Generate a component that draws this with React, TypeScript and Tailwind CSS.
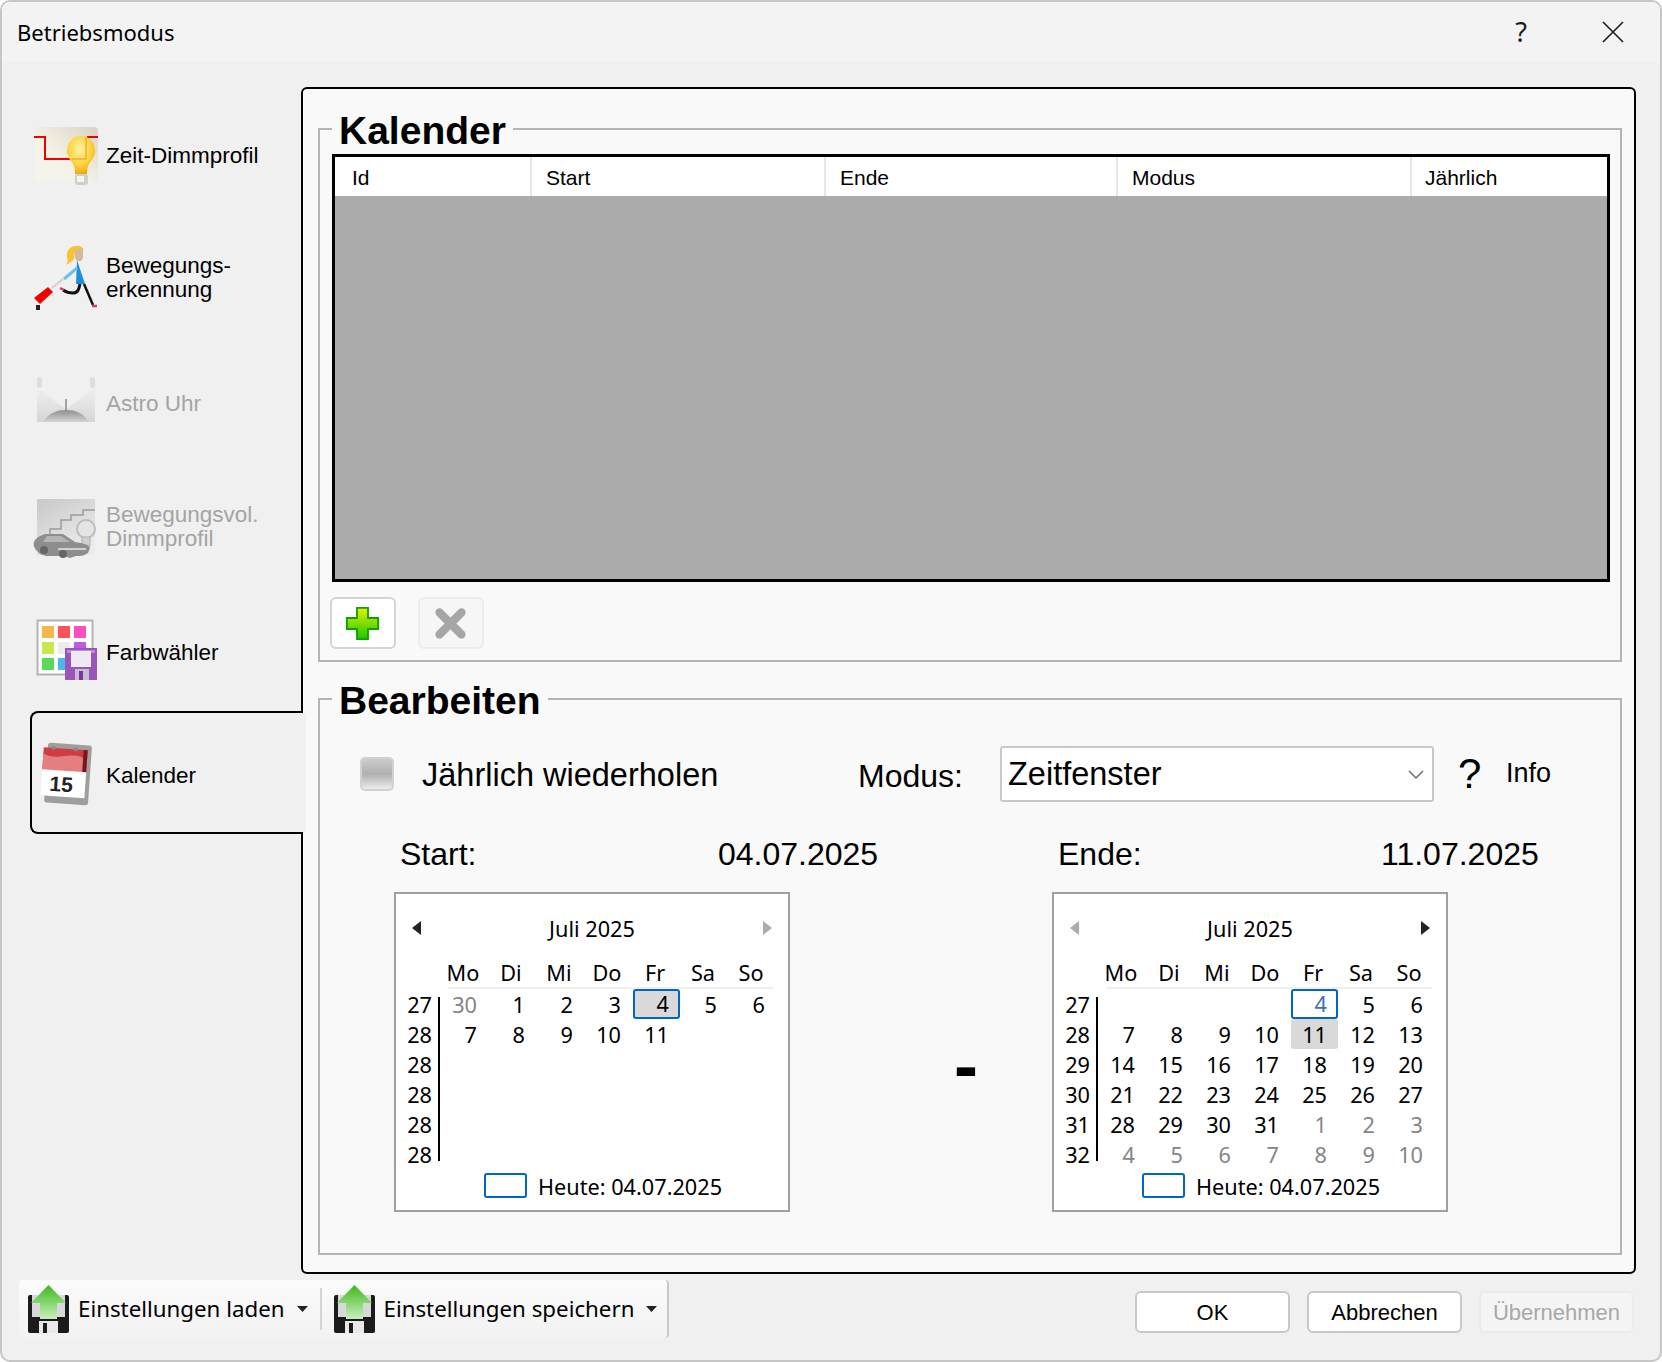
import type { ReactNode } from "react";

const SANS = "font-['Liberation_Sans',Arial,sans-serif]";
const UI = "font-['Noto_Sans',sans-serif]";

function BulbIcon() {
  return (
    <svg width="64" height="64" viewBox="0 0 64 64">
      <defs>
        <linearGradient id="bulbBg" x1="1" y1="0" x2="0" y2="1">
          <stop offset="0" stopColor="#d8d4c4" />
          <stop offset="0.6" stopColor="#f5f3e8" />
          <stop offset="1" stopColor="#f5f4ec" />
        </linearGradient>
        <radialGradient id="bulbGlow" cx="0.45" cy="0.35" r="0.7">
          <stop offset="0" stopColor="#fff3a0" />
          <stop offset="0.6" stopColor="#ffd23c" />
          <stop offset="1" stopColor="#eaa012" />
        </radialGradient>
      </defs>
      <rect x="0" y="3" width="64" height="54" rx="4" fill="url(#bulbBg)" />
      <path d="M0 13H11V35H38" fill="none" stroke="#f00000" strokeWidth="2" />
      <path d="M53 13H64" fill="none" stroke="#f00000" strokeWidth="2" />
      <path d="M33 27c0-9 6-15 14-15s14 6 14 15c0 7-5 10-7 15-1 3-1 6-1 8H41c0-2 0-5-1-8-2-5-7-8-7-15z" fill="url(#bulbGlow)" />
      <path d="M38 35H52V13" fill="none" stroke="#e09a20" strokeWidth="1" />
      <rect x="41" y="50" width="13" height="11" rx="3" fill="#cfcfc8" />
      <rect x="43" y="52" width="7" height="6" fill="#f4f4f0" />
    </svg>
  );
}

function WalkerIcon() {
  return (
    <svg width="75" height="75" viewBox="0 0 75 75" className="-ml-[4px] -mt-[5px]">
      <path d="M37 17C36 9 42 5 50 6l4 3-9 2-1 8-3 3-5 3c2-3 2-5 1-8z" fill="#f5c431" />
      <path d="M45 9h8v9l-2 3h-4l-2-3z" fill="#d8b89a" />
      <path d="M47 20l8 24H46z" fill="#1f8fd8" />
      <path d="M47 28L34 39" stroke="#6cc0ea" strokeWidth="3" />
      <path d="M33 39L22 48" stroke="#cfcfcf" strokeWidth="2" />
      <path d="M4 58L18 47l5 5-13 12z" fill="#f00000" />
      <rect x="6" y="65" width="4" height="5" fill="#222222" />
      <path d="M54 44l9 21" stroke="#111111" strokeWidth="2.5" />
      <path d="M50 44c-1 5-2 9-7 9-4 0-7-1-10-3" fill="none" stroke="#111111" strokeWidth="3" />
      <path d="M62 66h5M30 48l4 2" stroke="#d8386a" strokeWidth="2.5" />
    </svg>
  );
}

function AstroIcon() {
  return (
    <svg width="64" height="64" viewBox="0 0 64 64">
      <defs>
        <linearGradient id="astroDish" x1="0" y1="0" x2="0" y2="1">
          <stop offset="0" stopColor="#8f8f8f" />
          <stop offset="1" stopColor="#d4d4d4" />
        </linearGradient>
        <linearGradient id="astroSide" x1="0" y1="0" x2="0" y2="1">
          <stop offset="0" stopColor="#f0f0f0" />
          <stop offset="1" stopColor="#d6d6d6" />
        </linearGradient>
      </defs>
      <path d="M3 15L30 36H34L61 15V50H3z" fill="url(#astroSide)" />
      <path d="M9 50c6-9 13-12 23-12s17 3 23 12z" fill="url(#astroDish)" />
      <path d="M32 27V39" stroke="#8a8a8a" strokeWidth="1.5" />
      <rect x="3" y="5" width="5" height="11" rx="2.5" fill="#dedede" />
      <rect x="56" y="5" width="5" height="11" rx="2.5" fill="#dedede" />
    </svg>
  );
}

function StairsIcon() {
  return (
    <svg width="75" height="75" viewBox="0 0 75 75" className="-ml-[4px] mt-[2px]">
      <defs>
        <linearGradient id="stairBg" x1="0" y1="0" x2="0.6" y2="1">
          <stop offset="0" stopColor="#c8c8c8" />
          <stop offset="1" stopColor="#ebebeb" />
        </linearGradient>
      </defs>
      <rect x="7" y="7" width="58" height="56" fill="url(#stairBg)" />
      <path d="M20 42V37H31V28H41V23H53V18H65" fill="none" stroke="#9c9c9c" strokeWidth="1.5" />
      <circle cx="56" cy="37" r="9" fill="#e4e4e4" stroke="#bcbcbc" strokeWidth="2" />
      <rect x="52" y="45" width="8" height="9" fill="#d0d0d0" stroke="#b0b0b0" />
      <path d="M4 50c2-5 8-7 11-8h18l12 8c6 1 14 2 15 6l-2 5c-4 3-8 3-12 3l-6 2-6-2H16l-6-2-4-4c-2-3-3-5-2-8z" fill="#8e8e8e" />
      <path d="M17 44h14l9 6H13z" fill="#b4b4b4" />
      <path d="M28 57h28" stroke="#d0d0d0" strokeWidth="2" />
      <circle cx="14" cy="58" r="4" fill="#666666" />
      <circle cx="33" cy="62" r="4" fill="#666666" />
    </svg>
  );
}

function PaletteIcon() {
  const colors = ["#f5b84d", "#f7545a", "#f74fc0", "#c4ea4f", "#ececec", "#b95ce6", "#5bd95b", "#4ab8ea", "#ffffff"];
  return (
    <svg width="64" height="64" viewBox="0 0 64 64">
      <rect x="3.5" y="1.5" width="55" height="54" fill="#ffffff" stroke="#b4b4b4" strokeWidth="2" />
      {colors.map((c, i) => (
        <rect key={i} x={8 + (i % 3) * 16} y={7 + Math.floor(i / 3) * 16} width="12" height="12" fill={c} />
      ))}
      <rect x="31" y="29" width="32" height="32" fill="#9a55b8" />
      <rect x="33" y="31" width="28" height="3" fill="#c08ad8" />
      <rect x="37" y="32" width="20" height="16" fill="#eeeaf4" />
      <rect x="41" y="50" width="14" height="11" fill="#c8bcd4" />
      <rect x="45" y="52" width="4" height="9" fill="#7a3698" />
    </svg>
  );
}

function CalendarIcon() {
  return (
    <svg width="64" height="66" viewBox="0 0 64 66">
      <g transform="rotate(4 30 33)">
        <rect x="8" y="3" width="44" height="60" rx="3" fill="#9e9e9e" />
        <rect x="4" y="8" width="44" height="24" fill="#cf3d42" />
        <path d="M4 14c14 8 30-6 44 4v14H4z" fill="#e57e80" />
        <rect x="4" y="30" width="44" height="26" fill="#ffffff" />
        <rect x="44" y="8" width="4" height="22" fill="#7c1418" />
        <circle cx="14" cy="8" r="2" fill="#888888" />
        <circle cx="36" cy="8" r="2" fill="#888888" />
        <text x="24" y="51" textAnchor="middle" fontFamily="Liberation Sans" fontWeight="700" fontSize="21" fill="#222222">15</text>
      </g>
    </svg>
  );
}

function FloppyArrow() {
  return (
    <svg width="41" height="48" viewBox="0 0 41 48" className="shrink-0">
      <defs>
        <linearGradient id="floppyArrow" x1="0" y1="0" x2="0" y2="1">
          <stop offset="0" stopColor="#3fb81c" />
          <stop offset="1" stopColor="#c8f0c0" />
        </linearGradient>
      </defs>
      <rect x="0" y="10" width="41" height="38" rx="2" fill="#1b1b1b" />
      <rect x="4" y="10" width="33" height="22" fill="#d8d8d8" />
      <rect x="11" y="36" width="19" height="12" fill="#e8e8e8" />
      <rect x="15" y="38" width="4" height="10" fill="#1b1b1b" />
      <path d="M20.5 0L38 18H29V34H12V18H3z" fill="url(#floppyArrow)" />
    </svg>
  );
}

function PlusIcon() {
  return (
    <svg width="33" height="33" viewBox="0 0 36 36">
      <defs>
        <linearGradient id="plusFill" x1="0" y1="0" x2="0" y2="1">
          <stop offset="0" stopColor="#e4f000" />
          <stop offset="1" stopColor="#18c800" />
        </linearGradient>
      </defs>
      <path d="M12 1H24V12H35V24H24V35H12V24H1V12H12z" fill="url(#plusFill)" stroke="#12a000" strokeWidth="2" />
    </svg>
  );
}

function CrossIcon() {
  return (
    <svg width="33" height="33" viewBox="0 0 36 36">
      <path d="M6 6L30 30M30 6L6 30" stroke="#a6a6a6" strokeWidth="9" strokeLinecap="round" />
    </svg>
  );
}

function Group({ title, className, children }: { title: string; className: string; children: ReactNode }) {
  return (
    <fieldset className={`border-2 border-[#b4b4b4] ${className}`}>
      <legend className={`ml-[12px] px-[7px] pt-[4px] text-[39px] leading-[40px] font-bold text-black ${SANS}`}>{title}</legend>
      {children}
    </fieldset>
  );
}

function NavItem({ icon, label, disabled, className = "h-[124px]", textClass = "" }: { icon: ReactNode; label: string[]; disabled?: boolean; className?: string; textClass?: string }) {
  return (
    <div className={`flex items-center pl-[32px] ${className}`}>
      <div className="w-[64px] shrink-0">{icon}</div>
      <div className={`ml-[8px] text-[22.5px] leading-[24px] ${textClass} ${disabled ? "text-[#a4a4a4]" : "text-black"}`}>
        {label.map((l) => (
          <div key={l}>{l}</div>
        ))}
      </div>
    </div>
  );
}

type Day = { n?: number; muted?: boolean; selected?: boolean; today?: boolean };

function Triangle({ dir, active }: { dir: "left" | "right"; active: boolean }) {
  return (
    <svg width="9" height="14" viewBox="0 0 9 14">
      <path d={dir === "left" ? "M9 0V14L0 7z" : "M0 0V14L9 7z"} fill={active ? "#222222" : "#acacac"} />
    </svg>
  );
}

function Calendar({ weeks, rows, prev, next }: { weeks: number[]; rows: Day[]; prev: boolean; next: boolean }) {
  return (
    <div className={`w-[396px] h-[320px] shrink-0 border-2 border-[#a0a0a0] bg-white text-[21.7px] text-black ${UI}`}>
      <div className="mt-[20px] h-[28px] px-[16px] flex items-center justify-between">
        <Triangle dir="left" active={prev} />
        <span className="pt-[2px] leading-[26px]">Juli 2025</span>
        <Triangle dir="right" active={next} />
      </div>
      <div className="mt-[16px] ml-[43px] w-[336px] h-[28px] grid grid-cols-7 text-center pt-[2px] leading-[26px]">
        {["Mo", "Di", "Mi", "Do", "Fr", "Sa", "So"].map((d) => (
          <span key={d}>{d}</span>
        ))}
      </div>
      <div className="mt-[1px] ml-[52px] w-[326px] h-[2px] bg-[#f0f0f0]" />
      <div className="flex h-[180px]">
        <div className="w-[36px] text-right">
          {weeks.map((w, i) => (
            <div key={i} className="h-[30px] pt-[2px] leading-[28px]">{w}</div>
          ))}
        </div>
        <div className="ml-[6px] my-[8px] w-[2px] bg-black" />
        <div className="ml-[1px] w-[336px] grid grid-cols-7 auto-rows-[30px] content-start">
          {rows.map((d, i) => (
            <div
              key={i}
              className={`h-[30px] w-[47px] text-right rounded-[3px] ${d.muted ? "text-[#858585]" : ""} ${d.selected ? "bg-[#d9d9d9]" : ""} ${d.today ? "border-2 border-[#0067c0] leading-[26px] pr-[9px]" : "pt-[2px] leading-[28px] pr-[11px]"} ${d.today && !d.selected ? "text-[#3b6fc4]" : ""}`}
            >
              {d.n}
            </div>
          ))}
        </div>
      </div>
      <div className="mt-[4px] pl-[88px] flex items-center gap-[11px]">
        <div className="w-[43px] h-[25px] rounded-[3px] border-2 border-[#0067c0]" />
        <span className="pt-[2px] leading-[23px]">Heute: 04.07.2025</span>
      </div>
    </div>
  );
}

const startRows: Day[] = [
  { n: 30, muted: true },
  { n: 1 },
  { n: 2 },
  { n: 3 },
  { n: 4, selected: true, today: true },
  { n: 5 },
  { n: 6 },
  { n: 7 },
  { n: 8 },
  { n: 9 },
  { n: 10 },
  { n: 11 },
];

const endRows: Day[] = [
  {},
  {},
  {},
  {},
  { n: 4, today: true },
  { n: 5 },
  { n: 6 },
  { n: 7 },
  { n: 8 },
  { n: 9 },
  { n: 10 },
  { n: 11, selected: true },
  ...Array.from({ length: 19 }, (_, i): Day => ({ n: i + 12 })),
  { n: 31 },
  ...[1, 2, 3, 4, 5, 6, 7, 8, 9, 10].map((n): Day => ({ n, muted: true })),
];

const columns = [
  { name: "Id", w: "w-[197px] pl-[17px]" },
  { name: "Start", w: "w-[294px] pl-[14px]" },
  { name: "Ende", w: "w-[292px] pl-[14px]" },
  { name: "Modus", w: "w-[294px] pl-[14px]" },
  { name: "Jährlich", w: "flex-1 pl-[13px]" },
];

function FooterButton({ label, disabled }: { label: string; disabled?: boolean }) {
  return (
    <button
      className={`w-[155px] h-[42px] rounded-[6px] border-2 text-[22px] ${disabled ? "border-[#ebebeb] bg-[#f4f4f4] text-[#a8a8a8]" : "border-[#c8c8c8] bg-white text-black"}`}
    >
      {label}
    </button>
  );
}

function ToolButton({ label }: { label: string }) {
  return (
    <div className="flex items-center shrink-0">
      <FloppyArrow />
      <span className={`ml-[9px] whitespace-nowrap text-[22.3px] text-black ${UI}`}>{label}</span>
      <svg width="11" height="6" viewBox="0 0 11 6" className="ml-[12px]">
        <path d="M0 0H11L5.5 6z" fill="#222222" />
      </svg>
    </div>
  );
}

export default function App() {
  return (
    <div className={`w-[1662px] h-[1362px] flex flex-col rounded-[10px] border-2 border-[#c6c6c6] bg-[#f0f0f0] overflow-hidden ${SANS}`}>
      <div className="h-[60px] shrink-0 flex items-center bg-[#f3f3f3] pl-[15px]">
        <span className={`text-[22px] text-black ${UI}`}>Betriebsmodus</span>
        <span className={`ml-auto text-[27px] text-[#1a1a1a] ${UI}`}>?</span>
        <svg width="22" height="22" viewBox="0 0 22 22" className="ml-[75px] mr-[36px]">
          <path d="M1 1L21 21M21 1L1 21" stroke="#1a1a1a" strokeWidth="1.6" />
        </svg>
      </div>

      <div className="flex flex-1 min-h-0 pt-[25px]">
        <nav className="w-[299px] shrink-0 pt-[7px]">
          <NavItem icon={<BulbIcon />} label={["Zeit-Dimmprofil"]} />
          <NavItem icon={<WalkerIcon />} label={["Bewegungs-", "erkennung"]} textClass="pb-[4px]" />
          <NavItem icon={<AstroIcon />} label={["Astro Uhr"]} disabled />
          <NavItem icon={<StairsIcon />} label={["Bewegungsvol.", "Dimmprofil"]} disabled textClass="pb-[3px]" />
          <NavItem icon={<PaletteIcon />} label={["Farbwähler"]} className="h-[121px]" textClass="pt-[4px]" />
          <div className="relative z-10 ml-[28px] mr-[-2px] h-[123px] flex items-center rounded-l-[8px] border-2 border-r-0 border-black bg-[#f0f0f0] pl-[6px] after:absolute after:top-0 after:bottom-0 after:right-[-3px] after:w-[3px] after:bg-[#f0f0f0]">
            <div className="w-[64px] shrink-0 pt-[2px]">
              <CalendarIcon />
            </div>
            <span className="ml-[4px] pt-[7px] text-[22.5px] text-black">Kalender</span>
          </div>
        </nav>

        <main className="w-[1335px] h-[1187px] shrink-0 rounded-[6px] border-2 border-black bg-[#f9f9f9] pt-[18px] pl-[15px] pr-[12px]">
          <Group title="Kalender" className="h-[555px]">
            <div className="pl-[12px]">
              <div className="mt-[3px] w-[1278px] h-[428px] border-[3px] border-black bg-[#ababab]">
                <div className="h-[39px] flex bg-white text-[21px] text-black">
                  {columns.map((c) => (
                    <div key={c.name} className={`${c.w} flex items-center pt-[2px] border-r-2 border-[#e6e6e6] last:border-r-0`}>
                      {c.name}
                    </div>
                  ))}
                </div>
              </div>
              <div className="-ml-[2px] mt-[15px] flex gap-[22px]">
                <button className="w-[66px] h-[52px] flex items-center justify-center rounded-[6px] border-2 border-[#d4d4d4] bg-white pr-[2px]">
                  <PlusIcon />
                </button>
                <button className="w-[66px] h-[52px] flex items-center justify-center rounded-[6px] border-2 border-[#ececec] bg-[#f6f6f6] pr-[2px]">
                  <CrossIcon />
                </button>
              </div>
            </div>
          </Group>

          <Group title="Bearbeiten" className="mt-[15px] h-[578px]">
            <div className="mt-[25px] h-[56px] flex items-center pl-[40px] text-black">
              <div className="w-[34px] h-[34px] rounded-[5px] border-2 border-[#d2d2d2] bg-gradient-to-b from-[#cccccc] via-[#b0b0b0] to-[#ececec]" />
              <span className="ml-[28px] w-[436px] pt-[2px] text-[32.5px]">Jährlich wiederholen</span>
              <span className="w-[142px] pt-[4px] text-[32px]">Modus:</span>
              <div className="w-[434px] h-[56px] flex items-center justify-between rounded-[3px] border-2 border-[#c8c8c8] bg-white pl-[6px] pr-[8px] pt-[1px] text-[32.5px]">
                Zeitfenster
                <svg width="16" height="10" viewBox="0 0 16 10">
                  <path d="M1 1L8 8L15 1" fill="none" stroke="#6a6a6a" strokeWidth="1.5" />
                </svg>
              </div>
              <span className="ml-[24px] w-[48px] text-[42px] leading-none">?</span>
              <span className="pb-[2px] text-[27px]">Info</span>
            </div>
            <div className="mt-[33px] h-[38px] flex items-center pl-[80px] text-[32px] text-black">
              <span className="w-[318px]">Start:</span>
              <span className="w-[340px]">04.07.2025</span>
              <span className="w-[323px]">Ende:</span>
              <span>11.07.2025</span>
            </div>
            <div className="mt-[19px] ml-[74px] flex">
              <Calendar weeks={[27, 28, 28, 28, 28, 28]} rows={startRows} prev next={false} />
              <div className="w-[262px] flex items-center justify-center pl-[90px] pt-[26px] text-[72px] leading-none font-bold text-black">-</div>
              <Calendar weeks={[27, 28, 29, 30, 31, 32]} rows={endRows} prev={false} next />
            </div>
          </Group>
        </main>
      </div>

      <div className="h-[86px] shrink-0 flex items-start justify-between pl-[17px] pr-[26px]">
        <div className="mt-[6px] w-[650px] h-[58px] flex items-center rounded-[4px] border-r-2 border-[#c8c8c8] bg-gradient-to-b from-[#fbfbfb] to-[#f2f2f2] pl-[9px]">
          <ToolButton label="Einstellungen laden" />
          <div className="ml-[12px] mr-[12px] w-[2px] h-[42px] shrink-0 bg-[#d4d4d4]" />
          <ToolButton label="Einstellungen speichern" />
        </div>
        <div className="mt-[17px] flex gap-[17px]">
          <FooterButton label="OK" />
          <FooterButton label="Abbrechen" />
          <FooterButton label="Übernehmen" disabled />
        </div>
      </div>
    </div>
  );
}
